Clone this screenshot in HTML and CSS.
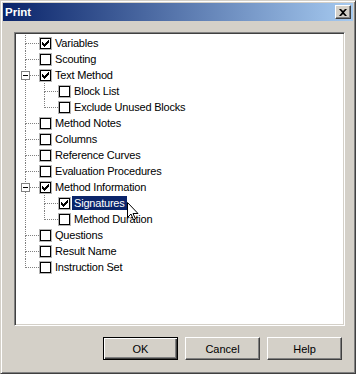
FILE: index.html
```html
<!DOCTYPE html>
<html lang="en">
<head>
    <meta charset="UTF-8">
    <title>Print</title>
    <link rel="stylesheet" href="styles.css">
</head>
<body>

    <div class="window">

        <div class="titlebar">
            <span class="title">Print</span>
            <button class="close" title="Close">
                <svg width="8" height="7" viewBox="0 0 8 7"><path d="M0 0h2l2 2 2-2h2L5 3.5 8 7H6L4 5 2 7H0l3-3.5z" fill="#000"/></svg>
            </button>
        </div>

        <div class="panel">
            <ul class="tree">
                <li><div class="row"><span class="box checked"></span><span class="label">Variables</span></div></li>
                <li><div class="row"><span class="box"></span><span class="label">Scouting</span></div></li>
                <li>
                    <span class="expander"></span>
                    <div class="row"><span class="box checked"></span><span class="label">Text Method</span></div>
                    <ul class="tree children">
                        <li><div class="row"><span class="box"></span><span class="label">Block List</span></div></li>
                        <li><div class="row"><span class="box"></span><span class="label">Exclude Unused Blocks</span></div></li>
                    </ul>
                </li>
                <li><div class="row"><span class="box"></span><span class="label">Method Notes</span></div></li>
                <li><div class="row"><span class="box"></span><span class="label">Columns</span></div></li>
                <li><div class="row"><span class="box"></span><span class="label">Reference Curves</span></div></li>
                <li><div class="row"><span class="box"></span><span class="label">Evaluation Procedures</span></div></li>
                <li>
                    <span class="expander"></span>
                    <div class="row"><span class="box checked"></span><span class="label">Method Information</span></div>
                    <ul class="tree children">
                        <li><div class="row"><span class="box checked"></span><span class="label selected">Signatures</span></div></li>
                        <li><div class="row"><span class="box"></span><span class="label">Method Duration</span></div></li>
                    </ul>
                </li>
                <li><div class="row"><span class="box"></span><span class="label">Questions</span></div></li>
                <li><div class="row"><span class="box"></span><span class="label">Result Name</span></div></li>
                <li><div class="row"><span class="box"></span><span class="label">Instruction Set</span></div></li>
            </ul>

            <!-- mouse pointer over the selected item -->
            <svg class="cursor" width="12" height="19" viewBox="0 0 12 19">
                <path d="M0.5 0.5v15l3.5-3.5 2.5 6 2-1-2.5-5.5h5z" fill="#fff" stroke="#000" stroke-width="1"/>
            </svg>
        </div>

        <div class="buttons">
            <button class="btn default">OK</button>
            <button class="btn">Cancel</button>
            <button class="btn">Help</button>
        </div>

    </div>

</body>
</html>
```

FILE: styles.css
```css
body {
    margin: 0;
    padding: 0;
    background-color: #d4d0c8;
    font-family: 'Liberation Sans', Arial, sans-serif;
    font-size: 11px;
    color: #000;
}
.window {
    width: 356px;
    height: 374px;
    box-sizing: border-box;
    border: 1px solid;
    border-color: #d4d0c8 #404040 #404040 #d4d0c8;
    box-shadow: inset 1px 1px #fff, inset -1px -1px #808080;
    padding: 2px;
    display: flex;
    flex-direction: column;
}
.titlebar {
    height: 18px;
    display: flex;
    align-items: center;
    justify-content: space-between;
    padding: 0 2px 0 2px;
    background: linear-gradient(to right, #0a246a, #a6caf0);
}
.title {
    color: #fff;
    font-weight: bold;
    font-size: 11.5px;
}
.close {
    width: 16px;
    height: 14px;
    padding: 0;
    display: flex;
    align-items: center;
    justify-content: center;
    background-color: #d4d0c8;
    border: 1px solid;
    border-color: #fff #404040 #404040 #fff;
    box-shadow: inset -1px -1px #808080;
}
.panel {
    position: relative;
    margin: 11px 8px 0 11px;
    height: 294px;
    box-sizing: border-box;
    background-color: #fff;
    border: 1px solid;
    border-color: #808080 #fff #fff #808080;
    box-shadow: inset 1px 1px #404040, inset -1px -1px #d4d0c8;
    padding: 2px 2px 0 2px;
}
.tree {
    list-style: none;
    margin: 0;
    padding: 0;
}
.tree li {
    position: relative;
}
/* dotted tree lines */
.tree li::before {
    content: '';
    position: absolute;
    left: 8px;
    top: 0;
    width: 13px;
    height: 8px;
    border-left: 1px dotted #808080;
    border-bottom: 1px dotted #808080;
}
.tree li::after {
    content: '';
    position: absolute;
    left: 8px;
    top: 9px;
    bottom: 0;
    border-left: 1px dotted #808080;
}
.tree li:last-child::after {
    display: none;
}
.children {
    padding-left: 19px;
}
.row {
    position: relative;
    height: 16px;
    display: flex;
    align-items: center;
    padding-left: 22px;
}
.expander {
    position: absolute;
    z-index: 1;
    left: 4px;
    top: 4px;
    width: 9px;
    height: 9px;
    box-sizing: border-box;
    border: 1px solid #808080;
    background-color: #fff;
}
.expander::after {
    content: '';
    position: absolute;
    left: 1px;
    top: 3px;
    width: 5px;
    height: 1px;
    background-color: #000;
}
.box {
    width: 11px;
    height: 11px;
    border: 1px solid #000;
    box-shadow: 0 0 0 1px #b4b4b4;
    margin-left: 1px;
    box-sizing: border-box;
    flex-shrink: 0;
    position: relative;
}
.box.checked::after {
    content: '';
    position: absolute;
    left: 1px;
    top: 1px;
    width: 7px;
    height: 7px;
    background: url("data:image/svg+xml,%3Csvg xmlns='http://www.w3.org/2000/svg' width='7' height='7' viewBox='0 0 7 7' shape-rendering='crispEdges'%3E%3Cpath d='M6 0h1v3h-1v1h-1v1h-1v1h-1v1h-1v-1h-1v-1h-1v-3h1v1h1v1h1v-1h1v-1h1z' fill='%23000'/%3E%3C/svg%3E") no-repeat;
}
.label {
    margin-left: 4px;
    white-space: nowrap;
    line-height: 14px;
    letter-spacing: -0.2px;
}
.label.selected {
    margin-left: 2px;
    padding: 0 2px;
    background-color: #0a246a;
    color: #fff;
}
.cursor {
    position: absolute;
    left: 112px;
    top: 169px;
}
.buttons {
    display: flex;
    justify-content: flex-end;
    gap: 7px;
    margin-top: 11px;
    padding-right: 11px;
}
.btn {
    width: 75px;
    height: 23px;
    font-family: 'Liberation Sans', Arial, sans-serif;
    font-size: 11px;
    color: #000;
    background-color: #d4d0c8;
    border: 1px solid;
    border-color: #fff #404040 #404040 #fff;
    box-shadow: inset -1px -1px #808080;
    padding: 0;
}
.btn.default {
    border: 1px solid #000;
    box-shadow: inset 1px 1px #fff, inset -1px -1px #404040, inset -2px -2px #808080;
}
```
